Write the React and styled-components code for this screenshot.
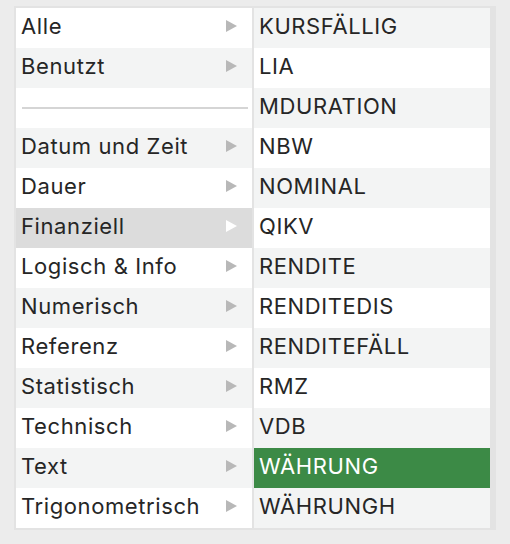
import React from 'react'
import styled, { createGlobalStyle } from 'styled-components'

const categories = [
    'Alle',
    'Benutzt',
    null,
    'Datum und Zeit',
    'Dauer',
    'Finanziell',
    'Logisch & Info',
    'Numerisch',
    'Referenz',
    'Statistisch',
    'Technisch',
    'Text',
    'Trigonometrisch',
]

const functions = [
    'KURSFÄLLIG',
    'LIA',
    'MDURATION',
    'NBW',
    'NOMINAL',
    'QIKV',
    'RENDITE',
    'RENDITEDIS',
    'RENDITEFÄLL',
    'RMZ',
    'VDB',
    'WÄHRUNG',
    'WÄHRUNGH',
]

const GlobalStyle = createGlobalStyle`
    html, body {
        margin: 0;
        padding: 0;
        background: #ececec;
    }
`

const Page = styled.div`
    width: 510px;
    height: 544px;
    padding: 6px 0 0 14px;
    box-sizing: border-box;
    font-family: Inter, "Liberation Sans", sans-serif;
`

const Panel = styled.div`
    display: flex;
    width: 478px;
    border: 2px solid #e3e3e3;
    background: #e3e3e3;
    gap: 2px;
`

const Column = styled.ul`
    list-style: none;
    margin: 0;
    padding: 0;
    width: 236px;
    display: flex;
    flex-direction: column;
`

const Row = styled.li`
    height: 40px;
    box-sizing: border-box;
    display: flex;
    align-items: center;
    justify-content: space-between;
    padding: 0 15px 4px 5px;
    font-size: 22px;
    letter-spacing: 0.6px;
    color: ${p => (p.$active === 'green' ? '#ffffff' : '#262626')};
    background: ${p =>
        p.$active === 'green' ? '#3c8a46'
        : p.$active === 'gray' ? '#dcdcdc'
        : p.$striped ? '#f3f4f4' : '#ffffff'};
`

const Separator = styled.li`
    height: 40px;
    display: flex;
    align-items: center;
    padding: 0 4px 0 6px;
    background: #ffffff;
    &::after {
        content: '';
        flex: 1;
        height: 2px;
        background: #d5d5d5;
    }
`

const Arrow = styled.span`
    width: 0;
    height: 0;
    border-top: 6px solid transparent;
    border-bottom: 6px solid transparent;
    border-left: 11px solid ${p => (p.$light ? '#ffffff' : '#b8b8b8')};
`

export default function App() {
    return (
        <>
            <GlobalStyle />
            <Page>
                <Panel>
                    <Column>
                        {categories.map((name, i) =>
                            name === null ? (
                                <Separator key={i} />
                            ) : (
                                <Row
                                    key={name}
                                    $striped={i % 2 === 1}
                                    $active={name === 'Finanziell' ? 'gray' : null}
                                >
                                    <span>{name}</span>
                                    <Arrow $light={name === 'Finanziell'} />
                                </Row>
                            )
                        )}
                    </Column>
                    <Column>
                        {functions.map((name, i) => (
                            <Row
                                key={name}
                                $striped={i % 2 === 0}
                                $active={name === 'WÄHRUNG' ? 'green' : null}
                            >
                                {name}
                            </Row>
                        ))}
                    </Column>
                </Panel>
            </Page>
        </>
    )
}
